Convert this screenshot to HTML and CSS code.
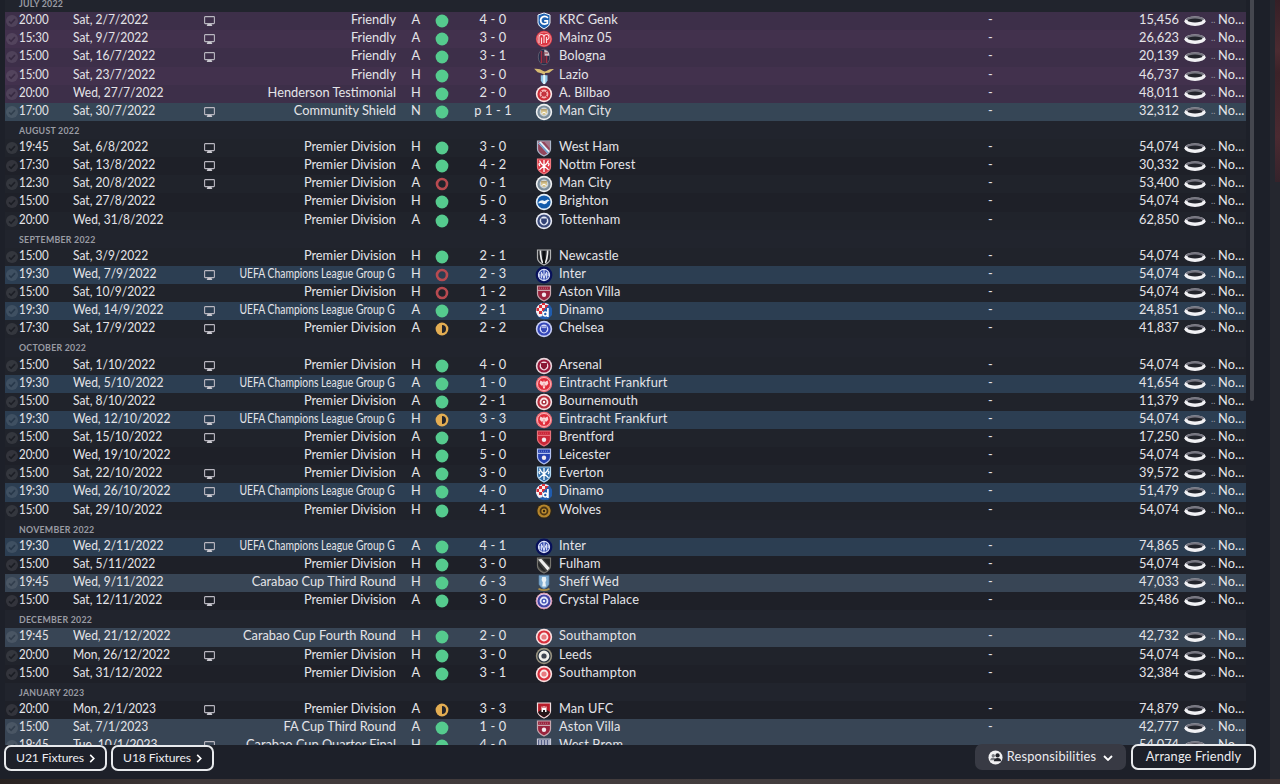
FILE: index.html
```html
<!DOCTYPE html>
<html lang="en">
<head>
  <meta charset="UTF-8">
  <meta name="viewport" content="width=device-width, initial-scale=1.0">
  <title>Fixtures</title>
  <link rel="stylesheet" href="styles.css">
</head>
<body>
  <div class="screen">
    <main class="panel">
      <div class="viewport">
        <div class="fixtures" id="fixtures"></div>
        <div class="scrollbar"></div>
      </div>
      <footer class="actions">
        <button class="btn">U21 Fixtures <svg class="chev" viewBox="0 0 6 10"><path d="M1 1l4 4-4 4"/></svg></button>
        <button class="btn">U18 Fixtures <svg class="chev" viewBox="0 0 6 10"><path d="M1 1l4 4-4 4"/></svg></button>
        <span class="spacer"></span>
        <button class="btn-resp">
          <svg class="people" viewBox="0 0 16 16"><circle cx="8" cy="8" r="7.5" fill="#f0f0f2"/><circle cx="5.6" cy="6" r="1.8" fill="#777a80"/><path d="M2.3 11q.4-3 3.3-3 2.3 0 2.7 3z" fill="#777a80"/><circle cx="10.2" cy="5.8" r="2.3" fill="#202229"/><path d="M6.2 12q.3-3.6 4-3.6t3.9 3.6z" fill="#202229"/></svg>
          Responsibilities
          <svg class="chev-down" viewBox="0 0 10 6"><path d="M1 1l4 4 4-4"/></svg>
        </button>
        <button class="btn btn-arrange">Arrange Friendly</button>
      </footer>
    </main>
    <aside class="edge"><div class="edge-photo"></div></aside>
    <div class="ground"></div>
  </div>
  <script src="script.js"></script>
</body>
</html>
```
FILE: styles.css
```css
* { box-sizing: border-box; }
body {
  margin: 0;
  background: #1d2029;
  color: #e4e4e8;
  font-family: Lato, "Open Sans", sans-serif;
  font-size: 12.8px;
  overflow: hidden;
}
.screen {
  display: grid;
  grid-template-columns: 1270px 10px;
  grid-template-rows: 779px 5px;
  height: 784px;
}
.panel { background: #1d2029; }

/* list */
.viewport {
  display: flex;
  height: 745px;
  padding-left: 5px;
  overflow: hidden;
}
.fixtures { width: 1241px; margin-top: -6px; }
.scrollbar {
  width: 4px;
  height: 401px;
  margin-left: 4px;
  background: #45474f;
  border-radius: 0 0 2px 2px;
}
.month, .row { height: 18.14px; line-height: 15.4px; }
.month {
  padding-left: 14px;
  line-height: 19px;
  background: #21242d;
  color: #999ba3;
  font-size: 8.8px;
  font-weight: bold;
  letter-spacing: 0.25px;
}
.row {
  display: grid;
  grid-template-columns: 14px 54px 125px 22px 176px 7px 26px 26px 76px 25px 414px 41px 168px 32px 7px 28px;
  background: #1e2028;
  letter-spacing: 0.12px;
  white-space: nowrap;
}
.row:nth-child(odd) { background: #20232b; }
.row.friendly { background: #3d2f49; }
.row.friendly:nth-child(odd) { background: #42314d; }
.row.shield { background: #364656; }
.row.europe { background: #2c3e52; }
.row.cup { background: #384555; }
.row svg { display: block; }

.check { width: 12px; height: 12px; margin: 3px 0 0 1px; opacity: 0.09; }
.time, .date { letter-spacing: 0; transform-origin: left; }
.time { transform: scaleX(0.9); }
.date { transform: scaleX(0.94); }
.tv { width: 11px; height: 10px; margin: 4px auto 0; }
.comp { justify-self: end; letter-spacing: 0; }
.europe .comp { transform: scaleX(0.81); transform-origin: right; }
.europe .comp { margin-right: 1px; }
.venue { grid-column: 7; text-align: center; }
.result { width: 14px; height: 14px; margin: 2px auto 0; }
.score, .tv-time { text-align: center; }
.badge { width: 18px; height: 18px; margin: 0 auto; }
.club { padding-left: 3px; }
.att { text-align: right; letter-spacing: 0; }
.stadium { width: 22px; height: 12px; margin: 3px auto 0; }
.dots { color: #9b9ba5; font-size: 9px; }

/* bottom buttons */
.actions {
  display: flex;
  gap: 4px;
  height: 34px;
  padding: 0 14px 0 4px;
}
.btn, .btn-resp {
  display: flex;
  align-items: center;
  justify-content: center;
  height: 26px;
  padding: 0 0 2px;
  border: 2px solid #e8eaed;
  border-radius: 7px;
  background: #1d2029;
  color: #ececf0;
  font: inherit;
}
.btn { width: 103px; font-size: 12.2px; letter-spacing: -0.1px; }
.btn-arrange {
  width: 125px;
  margin-top: -1px;
  margin-left: 1px;
  font-size: 12.8px;
  letter-spacing: 0.15px;
}
.btn-resp {
  width: 151px;
  margin-top: -1px;
  border: none;
  background: #383a44;
  letter-spacing: 0.2px;
}
.spacer { flex: 1; }
.chev { width: 6px; height: 9px; margin: 2px 0 0 5px; }
.chev-down { width: 10px; height: 6px; margin: 3px 0 0 7px; }
.chev path, .chev-down path { fill: none; stroke: #fff; stroke-width: 1.8; }
.people { width: 15px; height: 15px; margin: 2px 4px 0 0; }

/* what shows around the panel */
.edge { background: #25272f; }
.edge-photo {
  height: 182px;
  margin-left: 5px;
  background: linear-gradient(#351f26, #4b2b31 28%, #3b2228 40%, #4a2a31 75%, #35232b);
}
.ground { grid-column: 1 / 3; background: linear-gradient(90deg, #282220, #40393a 15%, #433d3e 60%, #3e3434); }
```
FILE: script.js
```js
// time, date, tv, competition, venue, result, score, club, attendance
const months = [
  ['JULY 2022', [
    ['20:00', 'Sat, 2/7/2022', 1, 'Friendly', 'A', 'W', '4 - 0', 'KRC Genk', '15,456'],
    ['15:30', 'Sat, 9/7/2022', 1, 'Friendly', 'A', 'W', '3 - 0', 'Mainz 05', '26,623'],
    ['15:00', 'Sat, 16/7/2022', 1, 'Friendly', 'A', 'W', '3 - 1', 'Bologna', '20,139'],
    ['15:00', 'Sat, 23/7/2022', 0, 'Friendly', 'H', 'W', '3 - 0', 'Lazio', '46,737'],
    ['20:00', 'Wed, 27/7/2022', 0, 'Henderson Testimonial', 'H', 'W', '2 - 0', 'A. Bilbao', '48,011'],
    ['17:00', 'Sat, 30/7/2022', 1, 'Community Shield', 'N', 'W', 'p 1 - 1', 'Man City', '32,312']
  ]],
  ['AUGUST 2022', [
    ['19:45', 'Sat, 6/8/2022', 1, 'Premier Division', 'H', 'W', '3 - 0', 'West Ham', '54,074'],
    ['17:30', 'Sat, 13/8/2022', 1, 'Premier Division', 'A', 'W', '4 - 2', 'Nottm Forest', '30,332'],
    ['12:30', 'Sat, 20/8/2022', 1, 'Premier Division', 'A', 'L', '0 - 1', 'Man City', '53,400'],
    ['15:00', 'Sat, 27/8/2022', 0, 'Premier Division', 'H', 'W', '5 - 0', 'Brighton', '54,074'],
    ['20:00', 'Wed, 31/8/2022', 0, 'Premier Division', 'A', 'W', '4 - 3', 'Tottenham', '62,850']
  ]],
  ['SEPTEMBER 2022', [
    ['15:00', 'Sat, 3/9/2022', 0, 'Premier Division', 'H', 'W', '2 - 1', 'Newcastle', '54,074'],
    ['19:30', 'Wed, 7/9/2022', 1, 'UEFA Champions League Group G', 'H', 'L', '2 - 3', 'Inter', '54,074'],
    ['15:00', 'Sat, 10/9/2022', 0, 'Premier Division', 'H', 'L', '1 - 2', 'Aston Villa', '54,074'],
    ['19:30', 'Wed, 14/9/2022', 1, 'UEFA Champions League Group G', 'A', 'W', '2 - 1', 'Dinamo', '24,851'],
    ['17:30', 'Sat, 17/9/2022', 1, 'Premier Division', 'A', 'D', '2 - 2', 'Chelsea', '41,837']
  ]],
  ['OCTOBER 2022', [
    ['15:00', 'Sat, 1/10/2022', 1, 'Premier Division', 'H', 'W', '4 - 0', 'Arsenal', '54,074'],
    ['19:30', 'Wed, 5/10/2022', 1, 'UEFA Champions League Group G', 'A', 'W', '1 - 0', 'Eintracht Frankfurt', '41,654'],
    ['15:00', 'Sat, 8/10/2022', 0, 'Premier Division', 'A', 'W', '2 - 1', 'Bournemouth', '11,379'],
    ['19:30', 'Wed, 12/10/2022', 1, 'UEFA Champions League Group G', 'H', 'D', '3 - 3', 'Eintracht Frankfurt', '54,074'],
    ['15:00', 'Sat, 15/10/2022', 1, 'Premier Division', 'A', 'W', '1 - 0', 'Brentford', '17,250'],
    ['20:00', 'Wed, 19/10/2022', 0, 'Premier Division', 'H', 'W', '5 - 0', 'Leicester', '54,074'],
    ['15:00', 'Sat, 22/10/2022', 1, 'Premier Division', 'A', 'W', '3 - 0', 'Everton', '39,572'],
    ['19:30', 'Wed, 26/10/2022', 1, 'UEFA Champions League Group G', 'H', 'W', '4 - 0', 'Dinamo', '51,479'],
    ['15:00', 'Sat, 29/10/2022', 0, 'Premier Division', 'H', 'W', '4 - 1', 'Wolves', '54,074']
  ]],
  ['NOVEMBER 2022', [
    ['19:30', 'Wed, 2/11/2022', 1, 'UEFA Champions League Group G', 'A', 'W', '4 - 1', 'Inter', '74,865'],
    ['15:00', 'Sat, 5/11/2022', 0, 'Premier Division', 'H', 'W', '3 - 0', 'Fulham', '54,074'],
    ['19:45', 'Wed, 9/11/2022', 0, 'Carabao Cup Third Round', 'H', 'W', '6 - 3', 'Sheff Wed', '47,033'],
    ['15:00', 'Sat, 12/11/2022', 1, 'Premier Division', 'A', 'W', '3 - 0', 'Crystal Palace', '25,486']
  ]],
  ['DECEMBER 2022', [
    ['19:45', 'Wed, 21/12/2022', 0, 'Carabao Cup Fourth Round', 'H', 'W', '2 - 0', 'Southampton', '42,732'],
    ['20:00', 'Mon, 26/12/2022', 1, 'Premier Division', 'H', 'W', '3 - 0', 'Leeds', '54,074'],
    ['15:00', 'Sat, 31/12/2022', 0, 'Premier Division', 'A', 'W', '3 - 1', 'Southampton', '32,384']
  ]],
  ['JANUARY 2023', [
    ['20:00', 'Mon, 2/1/2023', 1, 'Premier Division', 'A', 'D', '3 - 3', 'Man UFC', '74,879'],
    ['15:00', 'Sat, 7/1/2023', 0, 'FA Cup Third Round', 'A', 'W', '1 - 0', 'Aston Villa', '42,777'],
    ['19:45', 'Tue, 10/1/2023', 1, 'Carabao Cup Quarter Final', 'H', 'W', '4 - 0', 'West Brom', '54,074']
  ]]
];

const SHIELD = 'M2.5 2h13v8q0 4-6.5 7-6.5-3-6.5-7z';

// concentric rings, outermost first
function rings(...colors) {
  const radii = [8.2, 6.6, 4.4, 2.6, 1.2];
  return colors.map((c, i) => `<circle cx="9" cy="9" r="${radii[i]}" fill="${c}"/>`).join('');
}
function shield(fill, edge, inner) {
  return `<path d="${SHIELD}" fill="${fill}" stroke="${edge}" stroke-width="1.2"/>${inner}`;
}
// shield with a dotted top band and a ball
function bandShield(fill, edge) {
  return shield(fill, edge, `<path d="M3 6.4h12" stroke="${edge}" stroke-width="1.2"/><path d="M4 4.2h10" stroke="${edge}" stroke-width="1" stroke-dasharray="1 1" opacity=".6"/><circle cx="9" cy="10.8" r="2.2" fill="#f3e9ee"/>`);
}
// shield with crossing ribbons
function crossShield(fill, edge) {
  return shield(fill, edge, '<path d="M4.5 3.5q1 3 4.5 5.5t4.5 4M13.5 3.5q-1 3-4.5 5.5t-4.5 4M9 3v12M5 9q-2-2 0-3M13 9q2-2 0-3" fill="none" stroke="#fff" stroke-width="1.3"/>');
}

const badges = {
  'KRC Genk': '<path d="M9 1l6 2v8q0 3-6 6-6-3-6-6V3z" fill="#1c5fae" stroke="#edf5fc"/><path d="M13 5.8Q10.5 3.6 7.4 5 4.8 7 6 10.2q2.2 3.2 6.4 1V8.8H9.2" fill="none" stroke="#fff" stroke-width="1.7"/>',
  'Mainz 05': '<circle cx="9" cy="9" r="8.2" fill="#dc3542"/><path d="M4 13V7q0-2.5 2.5-2.5T9 7v6M9 7q0-2.5 2.5-2.5T14 7t-2.5 3M6.5 7.5V14M11.5 7v6" fill="none" stroke="#fbd9dc" stroke-width="1.1"/><circle cx="9" cy="9" r="7" fill="none" stroke="#f3a7ac" stroke-width=".7"/>',
  'Bologna': '<ellipse cx="9" cy="9" rx="5.7" ry="7.8" fill="#222d49" stroke="#777584" stroke-width=".6"/><path d="M6.5 3v12M11.5 8v7" stroke="#a52e40" stroke-width="1.7"/><path d="M9.3 1.7q5 1 5 6h-5z" fill="#d4c8cd"/><path d="M9 4v11M10 5h3" stroke="#8d3542"/>',
  'Lazio': '<path d="M-.8 1.8q6-.5 9 2.3 2.5 1 4.5-.8Q15 1.6 19 2l-4.8 3.8-4 .2L9.5 8 7 6.4 2.6 5.2z" fill="#d8bc72"/><path d="M5.8 8.3h6.7v5.2q-1.3 3-3.3 3.8-2.4-.8-3.4-3.8z" fill="#8fc7e8"/><path d="M9.2 8v9" stroke="#e7f5fa" stroke-width="2"/>',
  'A. Bilbao': rings('#fbe8e8', '#cd2d38', '#f4b3b5', '#ba2431', '#f4cbcb') + '<path d="M6 6l6 6M12 6l-6 6" stroke="#c93540"/>',
  'Man City': rings('#f0f1f2', '#7b8d9b', '#ccd2d5') + '<path d="M6 6h6v3.2q0 2-3 3-3-1-3-3z" fill="#d6c48d"/><path d="M6.2 6.8h5.6" stroke="#a38e62"/><path d="M6.5 10.7l2.5-1.6 2.5 1.6" stroke="#fff" fill="none"/>',
  'West Ham': shield('#93465c', '#aeb8cb', '<path d="M3 4l9.5 10.5 2-2.5L5.8 2.5z" fill="#e9f3fa"/><path d="M4 4l9 10" stroke="#6b9ccb" stroke-width="1.4"/><path d="M9 2.5h6v7z" fill="#9e788d"/>'),
  'Nottm Forest': crossShield('#dc3845', '#f2777e'),
  'Brighton': rings('#e6f0f9', '#135bab') + '<path d="M3.5 9q3-3 6-1l3.2-1.5 2 1-2 1q-1 3-4.2 2.6Q6 9.5 3.5 10.5z" fill="#eef5fb"/>',
  'Tottenham': rings('#e6e9f3', '#394878', '#e3e8f4') + '<path d="M6.2 6.5h5.6v3q-.4 2-2.8 3-2.4-1-2.8-3z" fill="#324275"/>',
  'Newcastle': shield('#24252a', '#b2b3b4', '<path d="M5.4 2.5Q5.4 10 7.6 15M12.6 2.5q0 7.5-2.2 12.5" fill="none" stroke="#eeeeec" stroke-width="1.7"/><path d="M9 3v13" stroke="#08090b" stroke-width="1.6"/>'),
  'Inter': '<circle cx="9" cy="9" r="8.4" fill="#08115a"/><circle cx="9" cy="9" r="5.6" fill="#3d53b2" stroke="#dce2fa" stroke-width="1.1"/><path d="M6.4 12.4V6.2L9 12l2.6-5.8v6.2M9 4v10M4.8 8v3M13.2 7v3" fill="none" stroke="#dfe4fa" stroke-width="1"/>',
  'Aston Villa': bandShield('#99233d', '#c9a8af'),
  'Dinamo': '<circle cx="9" cy="9" r="8.2" fill="#205cae"/><path d="M1 10A8.2 8.2 0 0 1 14 2.6L8 9v5l-4 1q-2-2-3-5z" fill="#f5eded"/><path d="M4 3h3v3H4zM7 6h3v3H7zM10 3h3v3h-3zM1.5 6H4v3H1.5zM4 9h3v3H4zM7 1h3v2H7z" fill="#d82f38"/><path d="M8 9l6-6 3 4v6l-4 4H7z" fill="#205cae"/><circle cx="10.3" cy="12" r="2" fill="none" stroke="#fff" stroke-width="1.6"/><path d="M12.9 6v9" stroke="#fff" stroke-width="1.7"/>',
  'Chelsea': rings('#c7cef6', '#3547b8', '#d7dcfa') + '<path d="M6 6.5h6v3q-.5 2.5-3 3-2.5-.5-3-3z" fill="#3648b6"/><path d="M6.5 7.6h5" stroke="#d7dcfa" stroke-width=".8"/>',
  'Arsenal': rings('#ead6dc', '#9b183a', '#f0dce2') + '<path d="M6 6h6v3.5q-.5 2-3 3-2.5-1-3-3z" fill="#8a1734"/>',
  'Eintracht Frankfurt': rings('#f3727a', '#e02b39') + '<circle cx="9" cy="9" r="6.5" fill="none" stroke="#fbc0c4" stroke-width=".9"/><path d="M9 5l.8 2L12.6 5.4l.8 3-1.9 2.4-1-.8-.7 3.4H8.2L7.5 10l-1 .8-1.9-2.4.8-3L8.2 7z" fill="#fbd6d7"/><path d="M9 8v4" stroke="#e88086" stroke-width=".8"/>',
  'Bournemouth': rings('#f3e1e5', '#b82e3c', '#f8e4e6', '#a52d3b', '#ffffff'),
  'Brentford': bandShield('#c92637', '#e7727b'),
  'Leicester': bandShield('#253fae', '#b4c2f0'),
  'Everton': crossShield('#336fab', '#b5daf4'),
  'Wolves': rings('#28241d', '#b5852b', '#4a3515', '#c09031', '#34260f'),
  'Fulham': shield('#3f403f', '#77756f', '<path d="M3 3.5L12.5 14.6 14.7 12 6.3 2.7z" fill="#eeeeed"/><path d="M3 6l8 10-4-2-3.5-4zM8 2.8h6.8v7z" fill="#242527"/>'),
  'Sheff Wed': '<path d="M4 1.5h10v8.7q-1 3-5 4.8-4-1.8-5-4.8z" fill="#7dabd0" stroke="#557da3" stroke-width=".7"/><path d="M7.2 3h3.6l.6 3-1 2.2.6 4.3H7.2l.6-4L6.6 6z" fill="#e8f1f5"/><path d="M3.5 14.7q5.5 3 11 0" fill="none" stroke="#ae9045" stroke-width="1.7"/>',
  'Crystal Palace': rings('#f2dbeb', '#4344a5', '#e3e6fa', '#4052b3', '#f3f3fc') + '<circle cx="9" cy="9" r="7.8" fill="none" stroke="#cc7497" stroke-width=".7"/>',
  'Southampton': rings('#fbe0e1', '#d72f3c', '#f9e9e9', '#e87a80'),
  'Leeds': rings('#97927f', '#25303e', '#e9e9e7', '#3d4450') + '<circle cx="9" cy="9" r="4.4" fill="none" stroke="#f2f1ec" stroke-width="2"/>',
  'Man UFC': shield('#b91c29', '#f1dfe1', '<path d="M3 11l6-4 6 4-1 2-5 3.4L4 13z" fill="#251519"/><path d="M6.5 11V5.5h1V7h1V5h1v2h1V5.5h1V11H10V9H8v2z" fill="#fff"/>'),
  'West Brom': shield('#545e86', '#c8c9d8', '<path d="M5 3v10M8 3v12M11 3v12M14 3v9" stroke="#e2e2e9" stroke-width="1.2"/>')
};

const results = {
  W: '<circle cx="7" cy="7" r="6.4" fill="#55cb8e"/>',
  L: '<circle cx="7" cy="7" r="5" fill="none" stroke="#b84a50" stroke-width="2.6"/>',
  D: '<circle cx="7" cy="7" r="6.4" fill="#e3ad52"/><path d="M7 3a4 4 0 0 1 0 8z" fill="#23242b"/>'
};

const check = '<svg class="check" viewBox="0 0 12 12"><circle cx="6" cy="6" r="6" fill="#fff"/><path d="M3 6.3l2.1 2L9 4.2" fill="none" stroke="#000" stroke-width="1.7"/></svg>';
const tvIcon = '<svg class="tv" viewBox="0 0 11 10"><rect x=".6" y=".6" width="9.8" height="7" rx=".6" fill="none" stroke="#b9b7c0" stroke-width="1.1"/><path d="M3.5 8h4L8.3 10H2.7z" fill="#c9c8cf"/></svg>';
const stadium = '<svg class="stadium" viewBox="0 0 22 12"><ellipse cx="11" cy="6.2" rx="10.6" ry="4.8" fill="#f1f1f4"/><path d="M1.5 4.4Q3 1.6 11 1.4t9.5 3L17 5.500H5z" fill="#777681"/><ellipse cx="11" cy="5.5" rx="7.4" ry="1.9" fill="#22242b"/></svg>';

function rowClass(comp) {
  if (/Friendly|Testimonial/.test(comp)) return 'friendly';
  if (/Shield/.test(comp)) return 'shield';
  if (/UEFA/.test(comp)) return 'europe';
  if (/Cup/.test(comp)) return 'cup';
  return '';
}

let html = '';
months.forEach(([month, rows]) => {
  html += `<div class="month">${month}</div>`;
  rows.forEach(([time, date, tv, comp, venue, result, score, club, att]) => {
    html += `<div class="row ${rowClass(comp)}">
      ${check}
      <span class="time">${time}</span>
      <span class="date">${date}</span>
      ${tv ? tvIcon : '<span></span>'}
      <span class="comp">${comp}</span>
      <span class="venue">${venue}</span>
      <svg class="result" viewBox="0 0 14 14">${results[result]}</svg>
      <span class="score">${score}</span>
      <svg class="badge" viewBox="0 0 18 18" overflow="visible">${badges[club]}</svg>
      <span class="club">${club}</span>
      <span class="tv-time">-</span>
      <span class="att">${att}</span>
      ${stadium}
      <span class="dots">${month === 'JANUARY 2023' ? '.' : '..'}</span>
      <span>No...</span>
    </div>`;
  });
});
document.getElementById('fixtures').innerHTML = html;
```
